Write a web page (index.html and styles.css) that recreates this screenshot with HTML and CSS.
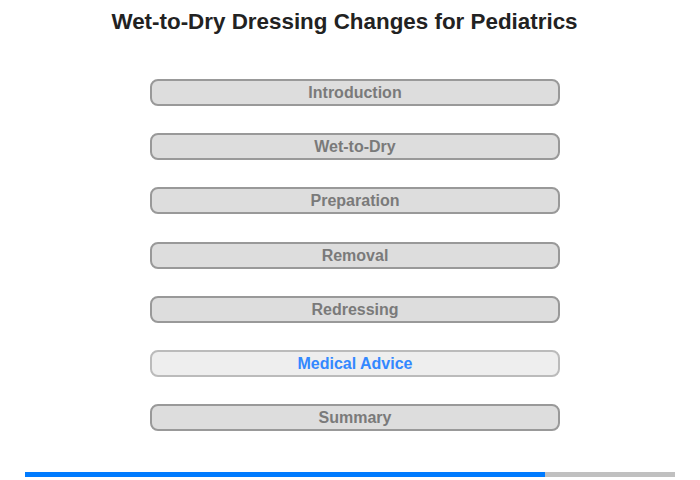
FILE: index.html
```html
<!DOCTYPE html>
<html>
<head>
<meta charset="utf-8">
<link rel="stylesheet" href="styles.css">
</head>
<body>
<div class="page">
  <h1 class="title">Wet-to-Dry Dressing Changes for Pediatrics</h1>
  <div class="menu">
    <div class="item">Introduction</div>
    <div class="item">Wet-to-Dry</div>
    <div class="item">Preparation</div>
    <div class="item">Removal</div>
    <div class="item">Redressing</div>
    <div class="item active">Medical Advice</div>
    <div class="item">Summary</div>
  </div>
  <div class="progress"><div class="bar" style="width:80%"></div></div>
</div>
</body>
</html>
```
FILE: styles.css
```css
html, body {
  margin: 0;
  padding: 0;
  background: #fff;
}
.page {
  width: 700px;
  height: 480px;
  font-family: "Liberation Sans", Arial, sans-serif;
  display: flex;
  flex-direction: column;
}
.title {
  margin: 10px 0 0 0;
  font-size: 22.4px;
  line-height: 24px;
  font-weight: bold;
  color: #222;
  text-align: center;
  padding-right: 11px;
}
.menu {
  margin-top: 45px;
  padding-left: 150px;
  display: flex;
  flex-direction: column;
  gap: 27.2px;
}
.item {
  width: 406px;
  height: 23px;
  border: 2px solid #999;
  border-radius: 8px;
  background: #ddd;
  color: #7a7a7a;
  font-size: 16px;
  font-weight: bold;
  line-height: 24px;
  text-align: center;
}
.item.active {
  background: #eee;
  border-color: #bbb;
  color: #3388ff;
}
.progress {
  margin: 40.7px 25px 0 25px;
  height: 5px;
  background: #c0c0c0;
}
.bar {
  height: 5px;
  background: #007bff;
}
```
